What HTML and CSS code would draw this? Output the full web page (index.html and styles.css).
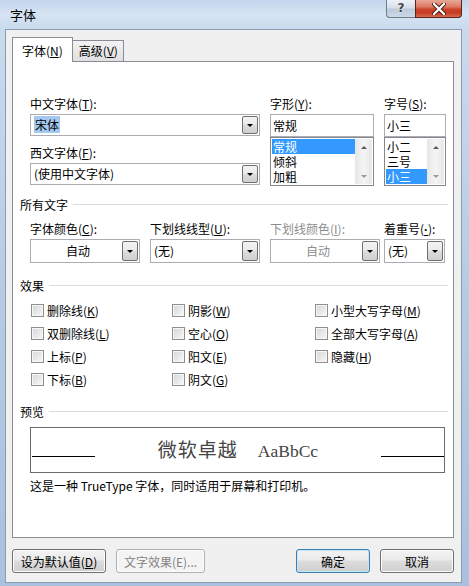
FILE: index.html
```html
<!DOCTYPE html>
<html lang="zh-CN">
<head>
    <meta charset="UTF-8">
    <title>字体</title>
    <link rel="stylesheet" href="styles.css">
</head>
<body>

<div class="window">
    <div class="titlebar">
        <span class="title">字体</span>
        <div class="caption-buttons">
            <span class="btn-help">?</span>
            <span class="btn-close">
                <svg width="14" height="12" viewBox="0 0 14 12">
                    <path d="M2 1 L12 11 M12 1 L2 11" stroke="#4a1a12" stroke-width="4.2" stroke-linecap="round"/>
                    <path d="M2 1 L12 11 M12 1 L2 11" stroke="#fff" stroke-width="2.4" stroke-linecap="round"/>
                </svg>
            </span>
        </div>
    </div>

    <div class="client">
        <div class="tabs">
            <span class="tab active">字体(<u>N</u>)</span>
            <span class="tab">高级(<u>V</u>)</span>
        </div>

        <div class="panel">
            <div class="font-row">
                <div class="col col-face">
                    <label>中文字体(<u>T</u>):</label>
                    <div class="combo"><span class="value"><span class="sel">宋体</span></span><span class="drop"></span></div>
                    <label class="second">西文字体(<u>F</u>):</label>
                    <div class="combo"><span class="value">(使用中文字体)</span><span class="drop"></span></div>
                </div>
                <div class="col col-style">
                    <label>字形(<u>Y</u>):</label>
                    <div class="textbox">常规</div>
                    <div class="listbox">
                        <ul>
                            <li class="selected">常规</li>
                            <li>倾斜</li>
                            <li>加粗</li>
                        </ul>
                        <div class="scroll"><span class="up"></span><span class="down"></span></div>
                    </div>
                </div>
                <div class="col col-size">
                    <label>字号(<u>S</u>):</label>
                    <div class="textbox">小三</div>
                    <div class="listbox">
                        <ul>
                            <li>小二</li>
                            <li>三号</li>
                            <li class="selected">小三</li>
                        </ul>
                        <div class="scroll"><span class="up"></span><span class="down"></span></div>
                    </div>
                </div>
            </div>

            <div class="group-title"><span>所有文字</span></div>
            <div class="color-row">
                <div class="field w110">
                    <label>字体颜色(<u>C</u>):</label>
                    <div class="combo tall"><span class="value center">自动</span><span class="drop"></span></div>
                </div>
                <div class="field w110">
                    <label>下划线线型(<u>U</u>):</label>
                    <div class="combo tall"><span class="value">(无)</span><span class="drop"></span></div>
                </div>
                <div class="field w110 disabled">
                    <label>下划线颜色(<u>I</u>):</label>
                    <div class="combo tall"><span class="value center">自动</span><span class="drop"></span></div>
                </div>
                <div class="field w61">
                    <label>着重号(<u class="dot">·</u>):</label>
                    <div class="combo tall"><span class="value">(无)</span><span class="drop"></span></div>
                </div>
            </div>

            <div class="group-title"><span>效果</span></div>
            <div class="effects">
                <div class="check"><span class="box"></span>删除线(<u>K</u>)</div>
                <div class="check"><span class="box"></span>双删除线(<u>L</u>)</div>
                <div class="check"><span class="box"></span>上标(<u>P</u>)</div>
                <div class="check"><span class="box"></span>下标(<u>B</u>)</div>
                <div class="check"><span class="box"></span>阴影(<u>W</u>)</div>
                <div class="check"><span class="box"></span>空心(<u>O</u>)</div>
                <div class="check"><span class="box"></span>阳文(<u>E</u>)</div>
                <div class="check"><span class="box"></span>阴文(<u>G</u>)</div>
                <div class="check"><span class="box"></span>小型大写字母(<u>M</u>)</div>
                <div class="check"><span class="box"></span>全部大写字母(<u>A</u>)</div>
                <div class="check"><span class="box"></span>隐藏(<u>H</u>)</div>
            </div>

            <div class="group-title"><span>预览</span></div>
            <div class="preview">
                <span class="baseline"></span>
                <span class="sample"><span class="cjk">微软卓越</span><span class="latin">AaBbCc</span></span>
                <span class="baseline"></span>
            </div>
            <p class="note">这是一种 TrueType 字体，同时适用于屏幕和打印机。</p>
        </div>

        <div class="buttons">
            <button class="btn">设为默认值(<u>D</u>)</button>
            <button class="btn disabled">文字效果(E)...</button>
            <button class="btn default push">确定</button>
            <button class="btn">取消</button>
        </div>
    </div>
</div>

</body>
</html>
```

FILE: styles.css
```css
body {
    margin: 0;
    font-family: "Noto Sans CJK SC", "Noto Sans", sans-serif;
    font-size: 12px;
    color: #000;
}
u {
    text-underline-offset: 1px;
}
u.dot {
    font-family: "Liberation Sans", sans-serif;
    font-weight: bold;
}
.window {
    width: 469px;
    height: 586px;
    box-sizing: border-box;
    padding: 0 7px 3px 5px;
    background: linear-gradient(180deg, #c4d6ec 0, #d6e3f2 14px, #c9daee 29px, #b5cbe5 300px, #a9c1de 586px);
    display: flex;
    flex-direction: column;
}

/* title bar */
.titlebar {
    height: 29px;
    display: flex;
    justify-content: space-between;
    align-items: flex-start;
}
.title {
    margin: 6px 0 0 5px;
    font-size: 13px;
    line-height: 17px;
}
.caption-buttons {
    display: flex;
    height: 19px;
}
.btn-help {
    width: 29px;
    height: 18px;
    box-sizing: border-box;
    border: 1px solid #6e7c8c;
    border-top: none;
    border-right: none;
    border-radius: 0 0 0 4px;
    background: linear-gradient(180deg, #eef2f7 0, #d6dfea 45%, #bccadb 55%, #cdd8e6 100%);
    color: #444;
    font-family: "DejaVu Sans", sans-serif;
    font-size: 12px;
    font-weight: bold;
    line-height: 17px;
    text-align: center;
    text-shadow: 0 0 2px #fff;
}
.btn-close {
    width: 47px;
    height: 18px;
    box-sizing: border-box;
    border: 1px solid #5e2219;
    border-top: none;
    border-radius: 0 0 4px 0;
    background: linear-gradient(180deg, #e9a898 0, #dd7a63 40%, #c9432a 55%, #c63b22 75%, #d86b4f 100%);
    display: flex;
    align-items: center;
    justify-content: center;
}

/* client area */
.client {
    flex: 1;
    background: #f0f0f0;
    border: 1px solid #8c9cb0;
    padding: 7px 7px 0 6px;
}
.tabs {
    display: flex;
    align-items: flex-end;
    height: 24px;
}
.tab {
    height: 21px;
    box-sizing: border-box;
    border: 1px solid #898c95;
    border-bottom: none;
    padding: 0 5px 0 6px;
    margin-left: -1px;
    line-height: 19px;
    background: linear-gradient(180deg, #f2f2f2, #e0e0e0);
}
.tab.active {
    position: relative;
    z-index: 1;
    margin-left: 0;
    height: 25px;
    margin-bottom: -1px;
    padding: 0 9px;
    line-height: 25px;
    background: #fff;
}
.panel {
    height: 477px;
    box-sizing: border-box;
    border: 1px solid #898c95;
    background: #fff;
    padding: 34px 5px 0 7px;
}

/* font choices */
.font-row {
    display: flex;
    gap: 10px;
    margin-left: 10px;
}
.col {
    display: flex;
    flex-direction: column;
}
.col-face { width: 230px; }
.col-style { width: 104px; }
.col-size { width: 62px; }
label {
    display: block;
    line-height: 15px;
    height: 15px;
    margin-bottom: 3px;
    white-space: nowrap;
}
label.second {
    margin-top: 9px;
}
.combo {
    height: 22px;
    box-sizing: border-box;
    border: 1px solid #abadb3;
    background: #fff;
    display: flex;
    align-items: center;
    padding: 1px;
}
.combo.tall {
    height: 24px;
}
.combo .value {
    flex: 1;
    padding-left: 2px;
    line-height: 18px;
    white-space: nowrap;
}
.combo .value.center {
    text-align: center;
}
.sel {
    background: #a4c8ef;
    padding: 0 1px;
}
.drop {
    width: 16px;
    height: 18px;
    box-sizing: border-box;
    border: 1px solid #707070;
    border-radius: 2px;
    background: linear-gradient(180deg, #f3f3f3 0, #ebebeb 45%, #dddddd 50%, #cfcfcf 100%);
    position: relative;
}
.combo.tall .drop {
    height: 20px;
}
.drop::after {
    content: "";
    position: absolute;
    left: 4px;
    top: 50%;
    margin-top: -1px;
    border-left: 3px solid transparent;
    border-right: 3px solid transparent;
    border-top: 3px solid #000;
}
.textbox {
    height: 23px;
    box-sizing: border-box;
    border: 1px solid #abadb3;
    padding: 0 2px;
    line-height: 21px;
}
.listbox {
    height: 49px;
    box-sizing: border-box;
    border: 1px solid #828790;
    display: flex;
    padding: 1px;
}
.listbox ul {
    flex: 1;
    list-style: none;
    margin: 0;
    padding: 0;
}
.listbox li {
    height: 15px;
    line-height: 15px;
    padding-left: 1px;
    overflow: hidden;
}
.listbox li.selected {
    background: #3399ff;
    color: #fff;
}
.scroll {
    width: 17px;
    background: linear-gradient(90deg, #e6e6e6, #f4f4f4 50%, #e8e8e8);
    display: flex;
    flex-direction: column;
    justify-content: space-between;
    align-items: center;
    padding: 7px 0 6px;
    box-sizing: border-box;
}
.scroll span {
    width: 0;
    height: 0;
    border-left: 3px solid transparent;
    border-right: 3px solid transparent;
}
.scroll .up {
    border-bottom: 3px solid #5a5a5a;
}
.scroll .down {
    border-top: 3px solid #9a9a9a;
}

/* group headings */
.group-title {
    display: flex;
    align-items: center;
    height: 15px;
    line-height: 15px;
    margin-top: 11px;
}
.group-title::after {
    content: "";
    flex: 1;
    height: 1px;
    background: #dcdcdc;
    margin-left: 5px;
}

/* all text */
.color-row {
    display: flex;
    margin: 9px 0 0 10px;
}
.field.w110 {
    width: 110px;
    margin-right: 10px;
}
.field.w110:nth-child(3) {
    margin-right: 4px;
}
.field.w61 {
    width: 61px;
}
.field.disabled label,
.field.disabled .value {
    color: #8d8d8d;
}

/* effects */
.color-row + .group-title {
    margin-top: 15px;
}
.effects {
    display: grid;
    grid-template-columns: 141px 143px 1fr;
    grid-template-rows: repeat(4, 23px);
    grid-auto-flow: column;
    margin: 6px 0 0 11px;
}
.check {
    display: flex;
    align-items: center;
    white-space: nowrap;
}
.check .box {
    width: 13px;
    height: 13px;
    box-sizing: border-box;
    border: 1px solid #8f8f8f;
    background: linear-gradient(135deg, #d4d6d9 0, #eaeaea 60%, #fbfbfb 100%);
    box-shadow: inset 0 0 0 1px #f6f6f6;
    margin-right: 3px;
}

/* preview */
.effects + .group-title {
    margin-top: 13px;
}
.preview {
    margin: 8px 0 0 10px;
    width: 415px;
    height: 46px;
    box-sizing: border-box;
    border: 1px solid #6b6b6b;
    display: flex;
    justify-content: space-between;
    align-items: flex-start;
    padding: 0 0 0 1px;
}
.baseline {
    width: 63px;
    height: 1px;
    background: #000;
    margin-top: 28px;
}
.sample {
    margin-top: 9px;
    line-height: 24px;
    color: #444;
    white-space: nowrap;
}
.sample .cjk {
    font-size: 19px;
    letter-spacing: 1px;
}
.sample .latin {
    font-family: "Liberation Serif", serif;
    font-size: 17.5px;
    margin-left: 20px;
}
.note {
    margin: 5px 0 0 10px;
    line-height: 15px;
}

/* dialog buttons */
.buttons {
    display: flex;
    gap: 10px;
    margin-top: 11px;
}
.btn {
    height: 24px;
    padding: 0;
    font-family: inherit;
    font-size: 12px;
    color: #000;
    border: 1px solid #707070;
    border-radius: 3px;
    background: linear-gradient(180deg, #f2f2f2 0, #ebebeb 45%, #dddddd 50%, #cfcfcf 100%);
    box-shadow: inset 0 0 0 1px #fcfcfc;
}
.btn:nth-child(1) { width: 94px; }
.btn:nth-child(2) { width: 89px; }
.btn:nth-child(3),
.btn:nth-child(4) { width: 74px; }
.btn.disabled {
    color: #838383;
    border-color: #adb2b5;
    background: #f4f4f4;
}
.btn.default {
    border-color: #3c7fb1;
    box-shadow: inset 0 0 0 1px #c5e6f8;
}
.btn.push {
    margin-left: auto;
}
```
